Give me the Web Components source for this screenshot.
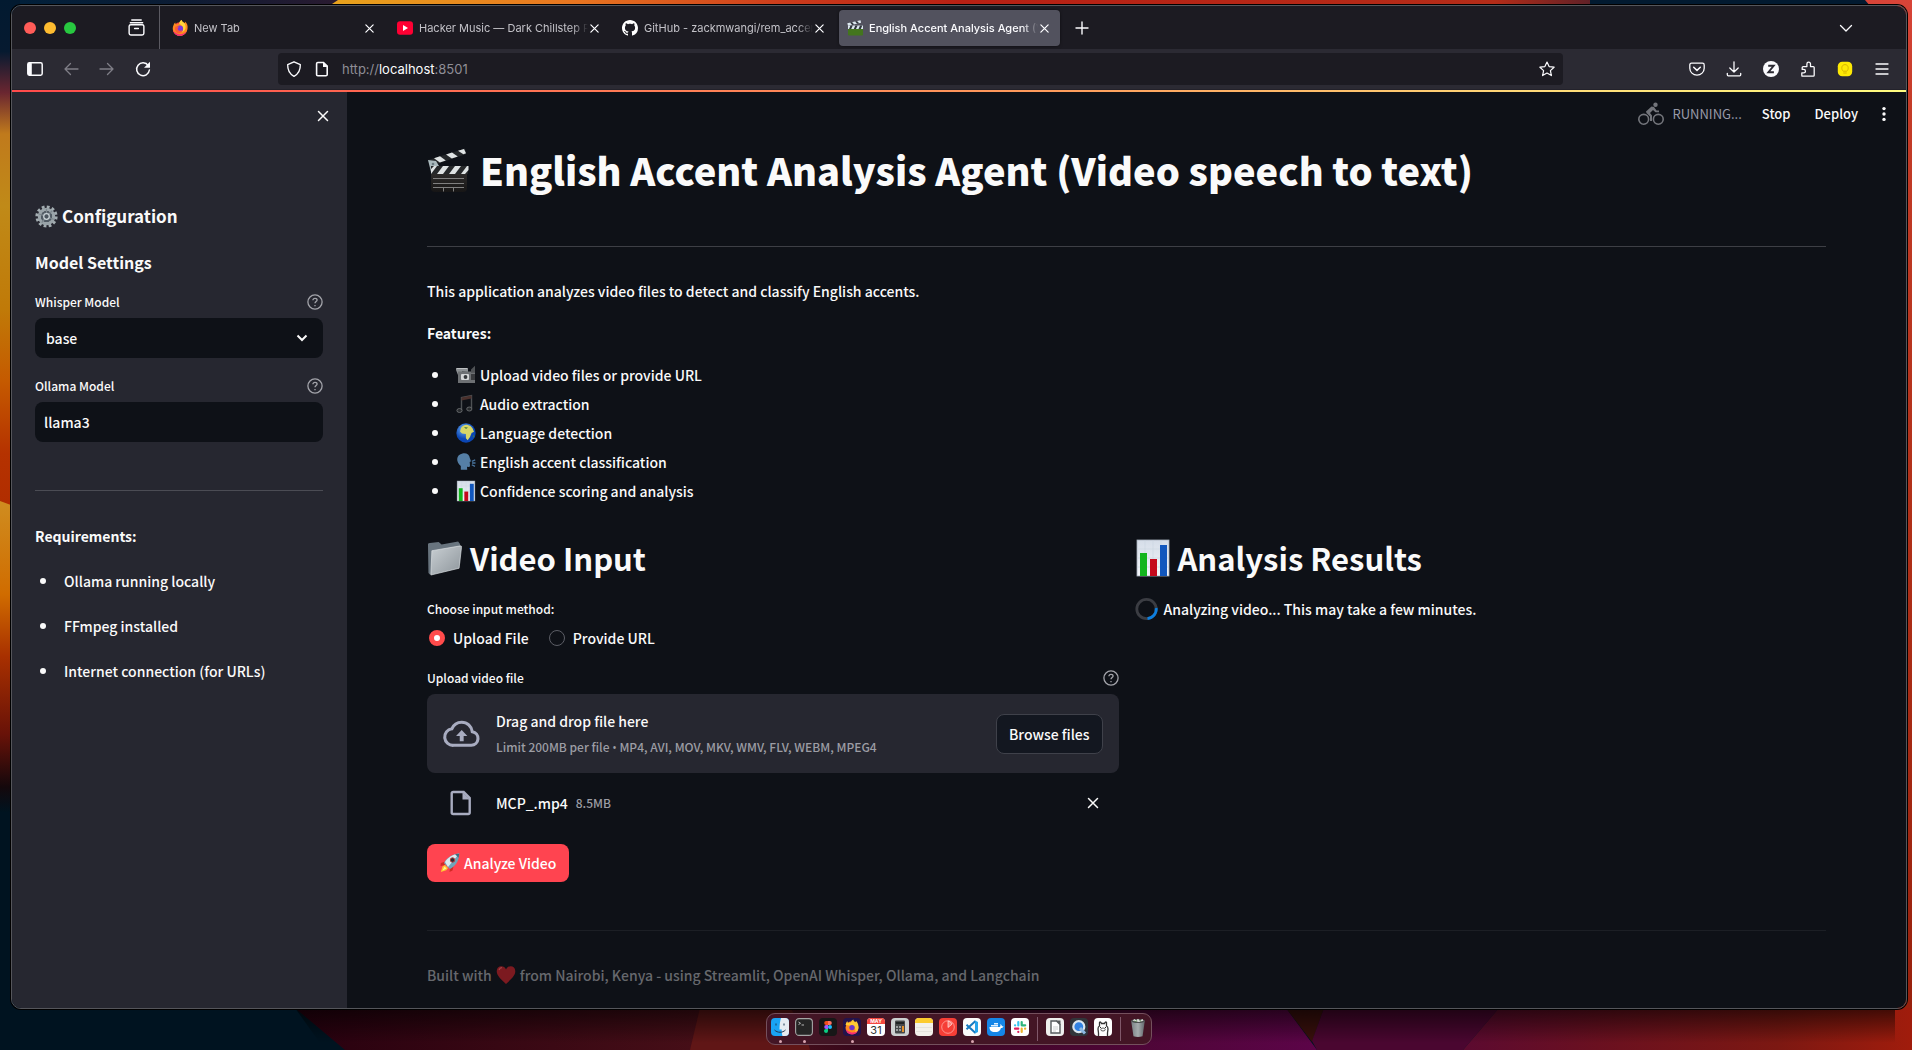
<!DOCTYPE html>
<html lang="en">
<head>
<meta charset="utf-8">
<title>English Accent Analysis Agent (Video speech to text)</title>
<style>
html,body{margin:0;height:100%;background:#00131f}
</style>
</head>
<body>
<desk-top></desk-top>
<script>
const ICONS = {
  archive:['0 0 18 18','<g fill="none" stroke="#fbfbfe" stroke-width="1.5" stroke-linecap="round"><path d="M4 1h10M2.5 4h13"/><rect x="1.2" y="6" width="15.6" height="11" rx="1.8"/><path d="M7 10h4"/></g>'],
  close:['0 0 16 16','<path d="M3.5 3.5l9 9M12.500 3.500l-9 9" stroke="currentColor" stroke-width="1.500" fill="none" stroke-linecap="round"/>'],
  plus:['0 0 16 16','<path d="M8 2v12M2 8h12" stroke="#fbfbfe" stroke-width="1.400" fill="none" stroke-linecap="round"/>'],
  chevron:['0 0 16 16','<path d="M2.500 5.500L8 11l5.500-5.500" stroke="#fbfbfe" stroke-width="1.300" fill="none" stroke-linecap="round" stroke-linejoin="round"/>'],
  sidebar:['0 0 16 16','<rect x=".8" y="1.800" width="14.400" height="12.400" rx="1.600" fill="none" stroke="#fbfbfe" stroke-width="1.500"/><rect x=".8" y="1.800" width="4" height="12.400" rx="1" fill="#fbfbfe"/>'],
  back:['0 0 16 16','<path d="M15 8H2M7.500 2.500L2 8l5.500 5.500" fill="none" stroke="#7f7e87" stroke-width="1.300" stroke-linecap="round" stroke-linejoin="round"/>'],
  forward:['0 0 16 16','<path d="M1 8h13M8.500 2.500L14 8l-5.500 5.500" fill="none" stroke="#7f7e87" stroke-width="1.300" stroke-linecap="round" stroke-linejoin="round"/>'],
  reload:['0 0 16 16','<path d="M13.300 4.600A6.400 6.400 0 1 0 14.400 9" fill="none" stroke="#fbfbfe" stroke-width="1.500" stroke-linecap="round"/><path d="M15 .8v6H9z" fill="#fbfbfe"/>'],
  shield:['0 0 16 16','<path d="M8 .8L14.300 3.600c.2 5-1.300 9-6.300 11.700C3 12.600 1.500 8.600 1.700 3.600z" fill="none" stroke="#fbfbfe" stroke-width="1.400" stroke-linejoin="round"/>'],
  page:['0 0 16 16','<path d="M3.800 1.500h5.700l3.700 3.700v8.300q0 1.300-1.300 1.300H3.900q-1.300 0-1.300-1.300V2.800q0-1.300 1.200-1.300z" fill="none" stroke="#fbfbfe" stroke-width="1.600"/><path d="M9 1v5h5z" fill="#fbfbfe"/>'],
  star:['0 0 16 16','<path d="M8 1l2.100 4.600 5 .6-3.700 3.400 1 5L8 12.100l-4.400 2.500 1-5L.9 6.200l5-.6z" fill="none" stroke="#fbfbfe" stroke-width="1.200" stroke-linejoin="round"/>'],
  pocket:['0 0 16 16','<path d="M2.500 2.200h11q1.700 0 1.700 1.700v3.400a7.200 6.800 0 0 1-14.400 0V3.900q0-1.700 1.700-1.700z" fill="none" stroke="#fbfbfe" stroke-width="1.300"/><path d="M4.700 6.300L8 9.400l3.300-3.100" fill="none" stroke="#fbfbfe" stroke-width="1.500" stroke-linecap="round" stroke-linejoin="round"/>'],
  download:['0 0 16 16','<path d="M8 .8v10M3.800 7L8 11l4.200-4M1.300 12.300v1.500q0 1 1 1h11.400q1 0 1-1v-1.500" fill="none" stroke="#fbfbfe" stroke-width="1.300" stroke-linecap="round" stroke-linejoin="round"/>'],
  zed:['0 0 16 16','<circle cx="8" cy="8" r="8" fill="#fbfbfe"/><path d="M5.200 4.800h5.500l-5.300 6.400h5.500" fill="none" stroke="#2b2a33" stroke-width="1.900"/>'],
  puzzle:['0 0 16 16','<path d="M2 15.200h11.200q1 0 1-1V6.600q0-1-1-1h-2.700V3a1.800 1.800 0 0 0-3.600 0v2.600H3.200q-1 0-1 1v1.800h1.500a1.700 1.700 0 0 1 0 3.500H1.800v2.300z" fill="none" stroke="#fbfbfe" stroke-width="1.300" stroke-linejoin="round"/>'],
  bulb:['0 0 16 16','<rect x=".8" y=".8" width="14.400" height="14.400" rx="4.500" fill="#fde905"/><path d="M6.200 10.200C4 8.500 4.200 3.600 8 3.600s4 4.900 1.800 6.600zM6.300 12h3.400" fill="none" stroke="#d8b400" stroke-width="1"/>'],
  menu:['0 0 16 16','<path d="M2 3h12M2 8h12M2 13h12" stroke="#fbfbfe" stroke-width="1.300" stroke-linecap="round"/>'],
  youtube:['0 0 16 16','<rect y="1.200" width="16" height="13.600" rx="3" fill="#f03"/><path d="M6 5l5 3-5 3z" fill="#fff"/>'],
  github:['0 0 16 16','<path fill="#fff" d="M8 0C3.580 0 0 3.580 0 8c0 3.540 2.290 6.530 5.470 7.590.4.070.55-.17.55-.38 0-.19-.01-.82-.01-1.490-2.010.37-2.530-.49-2.690-.94-.09-.23-.48-.94-.82-1.130-.28-.15-.68-.52-.01-.53.63-.01 1.080.58 1.230.82.72 1.210 1.870.87 2.330.66.07-.52.28-.87.51-1.070-1.780-.2-3.640-.89-3.640-3.950 0-.87.31-1.590.82-2.150-.08-.2-.36-1.020.08-2.120 0 0 .67-.21 2.200.82.64-.18 1.320-.27 2-.27s1.360.09 2 .27c1.530-1.040 2.200-.82 2.200-.82.44 1.100.16 1.920.08 2.120.51.56.82 1.270.82 2.150 0 3.070-1.870 3.750-3.650 3.950.29.25.54.73.54 1.480 0 1.070-.01 1.930-.01 2.200 0 .21.15.46.55.38A8.010 8.010 0 0 0 16 8c0-4.420-3.580-8-8-8z"/>'],
  firefox:['0 0 16 16','<circle cx="8" cy="9" r="6.800" fill="#ff4f3a"/><path d="M1.400 5.500C2 3.500 3 2.600 3.300 2.500c0 1 .4 1.600 1 2 1-.6 2-.7 3-.4C7 2 8.500.6 9.800 0c0 1.500 1.200 2 2.400 3 1-.1.800-.8.700-1.400C15.300 3.500 16 6 15.500 9c-.5 3-2.500 6-6 6.700C5 16.500 1.500 13.700.9 10c-.3-1.700 0-3.200.5-4.500z" fill="#ff8a1f"/><path d="M9.800 0c0 1.500 1.200 2 2.400 3 1.300 1.600 1.700 3.500 1.200 5.500-.5 2-2 3.300-3.800 3.400C12 9 11 5.500 7.300 4.100 7 2 8.500.6 9.800 0z" fill="#ffd53a"/><circle cx="7.800" cy="8.700" r="3.300" fill="#7a37dd"/><path d="M3 7c1.500-1.200 3.300-1 4.500 0-1.500.2-2 1.200-1.700 2.200.6 1.800 3.200 2 4.600.6-.3 2.500-2.400 3.900-4.500 3.400C3.700 12.700 2.500 10 3 7z" fill="#ff5a36"/><path d="M1 10c.6 3.500 3.600 6.300 8 5.800 2.500-.4 4.500-2 5.600-4.200C12.500 13.500 9 15 6 14c-2.500-.8-4.300-2.300-5-4z" fill="#f6287c"/>'],
  firefoxdock:['0 0 18 18','<rect width="18" height="18" rx="4" fill="#22134c"/><circle cx="9" cy="9.800" r="6.500" fill="#ff8a1f"/><path d="M2.500 7Q3 4.500 4.300 3q0 1.500 1 1.800l2.700-.2Q8 2.500 10.300 1.500q0 1.800 2 2.700l.8-1.200q2.800 2.800 2.300 7.300-.3 3-3.300 4.900 1-4-1.100-7z" fill="#ffc934"/><circle cx="9" cy="9.600" r="2.700" fill="#6c35cf"/><path d="M2.700 11q1 5.400 6.300 5.400 3.700 0 5.600-3.500-3 2-6.200 1.500T2.700 11z" fill="#f3297a"/>'],
  clapgreen:['0 0 16 16','<rect x="1" y="9" width="15" height="6.500" rx="1" fill="#43751d"/><path d="M.3 3.200L13.500.2l.6 2.600L1 5.800z" fill="#dce8ef"/><path d="M3 2.600l2.200 2.300 2-.5L5 2.100zM8 1.400l2.200 2.300 2-.5L10 .9z" fill="#30363c"/><rect x="1" y="5.500" width="15" height="3.500" fill="#dce8ef"/><path d="M3.500 5.500h2.300L4.200 9H2zM8.300 5.500h2.300L9 9H6.800zM13 5.500h2.300L13.800 9h-2.300z" fill="#30363c"/>'],
  clapper:['0 0 42 46','<defs><linearGradient id="a" x2="0" y2="1"><stop stop-color="#2c2a29"/><stop offset="1" stop-color="#171616"/></linearGradient></defs><path d="M1 13L38 1.500l1.200 5.500L4 19z" fill="#24272a"/><path d="M7 11.200l6-1.900 5.800 4.200-6 1.900zM19 7.500l6-1.900 5.800 4-6 2zM31 3.800l6-1.900 2 4.400-2.600.9z" fill="#dfe3e4"/><path d="M1 13l8 1 3 5-1.500 6H4z" fill="#aab9bd"/><circle cx="6" cy="17" r="1.300" fill="#6a7a80"/><rect x="4" y="19" width="37" height="8" fill="#26282a"/><path d="M10 27l6-8h6l-6 8zM22 27l6-8h6l-6 8zM34 27l6-8h1.500v4L38 27zM4 27v-5l3-3h3z" fill="#dfe3e4"/><path d="M4 27h36v14q0 4-4 4H8q-4 0-4-4z" fill="url(#a)"/><path d="M6 31.500h31M6 36.500h31M6 40.500h31M16.500 41v3.500M26.500 41v3.500" stroke="#8b8b8b" stroke-width=".9"/>'],
  gear:['0 0 24 24','<g fill="none"><circle cx="12" cy="12" r="10" stroke="#a3adb1" stroke-width="3.200" stroke-dasharray="2.900 2.336"/><circle cx="12" cy="12" r="7.400" stroke="#9aa4a9" stroke-width="3.500"/><circle cx="12" cy="12" r="5.800" fill="#535d66"/><path d="M12 12V4M12 12l7.500 3M12 12l-5 6.500M12 12L4.500 9.500M12 12l6-6" stroke="#7d878d" stroke-width="1.300"/><circle cx="12" cy="12" r="2.900" fill="#4c565f" stroke="#ccd5d9" stroke-width="1.300"/></g>'],
  help:['0 0 16 16','<circle cx="8" cy="8" r="7.100" fill="none" stroke="#a3a4aa" stroke-width="1.300"/><path d="M5.900 6.300C6 4.900 7 4.300 8 4.300s2.100.6 2.100 1.800c0 1.400-2.100 1.600-2.100 3.200M8 11v1.200" fill="none" stroke="#a3a4aa" stroke-width="1.300"/>'],
  camera:['0 0 20 20','<path d="M0 3h12v4L6 6.500v6H3L0 5z" fill="#8c9093"/><path d="M2 6.500h13l4-4v15.500H2z" fill="#6d7073"/><rect x="5" y="9" width="8" height="6" rx="1" fill="#d4d6d7"/><circle cx="9.500" cy="12" r="1.900" fill="#34373a"/><path d="M15 4.500L19 .8v7h-4z" fill="#4f5255"/><path d="M15 9h4v6h-4z" fill="#393b3e"/><path d="M1 3.500h10" stroke="#bdc0c2"/>'],
  music:['0 0 20 20','<path d="M5.500 16V3.500L15.500 1.500V14.500" fill="none" stroke="#4d5154" stroke-width="1.400"/><path d="M5.500 3.500L15.500 1.500v3l-10 2z" fill="#4a302c"/><ellipse cx="3.500" cy="16.500" rx="2.600" ry="2" fill="#272a2d" stroke="#73777a" stroke-width=".8"/><ellipse cx="13.300" cy="15" rx="2.600" ry="2" fill="#272a2d" stroke="#73777a" stroke-width=".8"/>'],
  globe:['0 0 20 20','<defs><radialGradient id="a" cx=".4" cy=".3"><stop stop-color="#6fb4f5"/><stop offset="1" stop-color="#0b46b4"/></radialGradient></defs><circle cx="10" cy="10" r="9.700" fill="url(#a)"/><path d="M5 5c1-2 3-3 6-3.300l3.500 1.200 2 2.300 1.500 3.500-2.500 1.300-1.500 4-2.300 3.300-1.800-2V11L6 10.600 4 8.500z" fill="#d7d767"/><path d="M8 4l4 .5-2 1.500zM17 12l1.300 1-1.300 2z" fill="#487f3b"/>'],
  speak:['0 0 20 20','<path d="M6.500 1.500c4-.8 7 1.300 7.300 4.500l1.200 3.200-1.300.8.300 3.700q0 1.300-1.500 1.200l-1.500-.1.200 3H4.800V14C2.500 12 1 9.500 1.200 7c.2-3 2.300-5 5.300-5.500z" fill="#557fa6"/><path d="M15.800 9.300l3.400-1.500M16 11h3.500M15.800 12.700l3.200 1.700" stroke="#48739c" stroke-width="1.300"/>'],
  chart:['0 0 32 36','<defs><linearGradient id="a" x2="0" y2="1"><stop stop-color="#d5dde8"/><stop offset="1" stop-color="#f3f6fa"/></linearGradient></defs><rect width="32" height="36" fill="url(#a)" stroke="#a7b0bc" stroke-width=".8"/><path d="M0 9h32M0 18h32M0 27h32M8 0v36M16 0v36M24 0v36" stroke="#c6d2df" stroke-width=".5"/><path d="M3 13h7v23H3z" fill="#13b51d"/><path d="M13 19h7v17h-7z" fill="#c5091c"/><path d="M23 5h7v31h-7z" fill="#1257bd"/>'],
  folder:['0 0 36 36','<defs><linearGradient id="a" x2="1" y2="1"><stop stop-color="#c9cfd3"/><stop offset="1" stop-color="#8d959b"/></linearGradient></defs><path d="M1 3.500Q1 2 3 2l9-1 3 2.500L32 .5 34 3v20L3 34.500 1.500 33z" fill="#68747e"/><path d="M5 10l29.500-5q1.200 0 1 1.500L33 28 4 35z" fill="url(#a)" stroke="#dce0e3" stroke-width=".7"/>'],
  cloud:['0 0 36 36','<path d="M10.300 29.500h17.200a6.700 6.700 0 0 0 1-13.300C27.700 11 23.600 7 18.200 7c-4.400 0-7.900 2.500-9.600 6.400A8.100 8.100 0 0 0 10.300 29.500z" fill="none" stroke="#a8acc0" stroke-width="3"/><path d="M18.200 14.500l5.500 6h-3.600v5h-3.800v-5h-3.600z" fill="#a8acc0"/>'],
  file:['0 0 26 26','<path d="M5.200 2h10.500l6 6v14.500q0 1.500-1.500 1.500h-15q-1.500 0-1.500-1.500v-19Q3.700 2 5.200 2z" fill="none" stroke="#a8acc0" stroke-width="2.400"/><path d="M14.500 2v7.500h7.500z" fill="#a8acc0"/>'],
  rocket:['0 0 20 20','<path d="M4 9L.8 10l-.3 3 4.500-1zM10 15l-.5 4 3-1.500 1-4z" fill="#d22a24"/><path d="M5 12l-2.500 1.500L.8 19l5.500-1.700L8 15z" fill="#ffc331"/><path d="M4.500 13.500L2.500 17.500 6.500 15.500z" fill="#fff3a0"/><path d="M4 10C7 4.500 12 1 19.300.5 19 8 15.500 13 10 16z" fill="#6fa4b8"/><path d="M5 9C8 4.500 13 1.200 19.300.5L8 14z" fill="#dceaf0"/><path d="M15 1.300l4.300-.8-.7 4.300z" fill="#406b7d"/><circle cx="12.500" cy="7" r="2.200" fill="#2a2f37" stroke="#b93a38" stroke-width="1"/>'],
  heart:['0 0 20 20','<path d="M10 19C6 15 .7 11 .7 6.200.7 3 2.800 1.200 5.300 1.200c2.200 0 3.800 1.200 4.700 3.200.9-2 2.500-3.200 4.700-3.200 2.500 0 4.600 1.800 4.600 5C19.300 11 14 15 10 19z" fill="#7c1a20"/><path d="M3 5q1-2.500 3-2.300" stroke="#a04448" stroke-width="1.200" fill="none"/>'],
  bike:['0 0 26 24','<g fill="none" stroke="#73757b" stroke-width="1.600"><circle cx="5.700" cy="17.300" r="4.900"/><circle cx="20.300" cy="17.300" r="4.900"/></g><circle cx="17.500" cy="2.700" r="2.200" fill="#73757b"/><path d="M8 9.500L13.500 4.500l2.500.5 2.500 3.500H21v1.800h-3.500L15 8l-3 3 2 2.500V19h-2v-4.500L8.500 11z" fill="#73757b"/>'],
  dots:['0 0 16 16','<g fill="#fafafa"><circle cx="8" cy="2.600" r="1.700"/><circle cx="8" cy="8" r="1.700"/><circle cx="8" cy="13.400" r="1.700"/></g>'],
  spinner:['0 0 24 24','<circle cx="11.500" cy="12" r="9.700" fill="none" stroke="#3b3d43" stroke-width="2.800"/><path d="M21.200 11A9.700 9.700 0 0 1 12.500 21.700" fill="none" stroke="#0c7fe0" stroke-width="2.800"/>'],
  finder:['0 0 18 18','<rect width="18" height="18" rx="4" fill="#19a4f4"/><path d="M10 0h4q4 0 4 4v10q0 4-4 4h-2.500c-.6-2-.8-4-.8-6.500H8.500C8.500 7 9 3 10 0z" fill="#e6ebf1"/><path d="M5 5.500v2M13 5.500v2M3.500 12c3 3 8 3 11 0" fill="none" stroke="#1c3650" stroke-width="1"/>'],
  terminal:['0 0 18 18','<rect x=".6" y=".6" width="16.800" height="16.800" rx="3.500" fill="#252525" stroke="#a5a5a5" stroke-width="1.100"/><path d="M3.500 4l2 1.300-2 1.300M6.500 7h2.500" fill="none" stroke="#ddd" stroke-width=".8"/>'],
  figma:['0 0 18 18','<rect width="18" height="18" rx="4" fill="#171717"/><path d="M9 3H7.200a2 2 0 0 0 0 4H9z" fill="#f24e1e"/><path d="M9 3h1.800a2 2 0 0 1 0 4H9z" fill="#ff7262"/><path d="M9 7H7.200a2 2 0 0 0 0 4H9z" fill="#a259ff"/><circle cx="11" cy="9" r="2" fill="#1abcfe"/><path d="M9 11H7.200A2 2 0 1 0 9 13z" fill="#0acf83"/>'],
  calc:['0 0 18 18','<rect width="18" height="18" rx="4" fill="#ccd0d0"/><rect x="4" y="2.500" width="10" height="13" rx="1" fill="#454849"/><path d="M5 4h8v2H5z" fill="#1e2222"/><g fill="#9a9d9e"><path d="M5 8h2v2H5zM8 8h2v2H8zM5 11h2v2H5zM8 11h2v2H8z"/></g><path d="M11 8h2v6h-2z" fill="#e3902a"/>'],
  notes:['0 0 18 18','<rect width="18" height="18" rx="4" fill="#f3f1eb"/><path d="M0 5V4q0-4 4-4h10q4 0 4 4v1z" fill="#fccb2e"/><path d="M1 9.500h16M1 13.500h16" stroke="#d6d4cd" stroke-width=".5"/>'],
  clock:['0 0 18 18','<rect width="18" height="18" rx="4" fill="#f63e36"/><circle cx="9" cy="9" r="6.300" fill="none" stroke="#ffaaa3" stroke-width=".8"/><path d="M9 3v6.500l4.200-3.500A5.500 5.500 0 0 0 9 3z" fill="#ff8078" stroke="#fff" stroke-width=".6"/>'],
  vscode:['0 0 18 18','<rect width="18" height="18" rx="4" fill="#fbfbfb"/><path d="M12.500 3L3.500 11.200M3.500 6.800l9 8.200" stroke="#1678c0" stroke-width="2" fill="none"/><path d="M12 2.500l3 1.500v10l-3 1.500z" fill="#26a3eb"/>'],
  docker:['0 0 18 18','<rect width="18" height="18" rx="4" fill="#1586e8"/><path d="M2.500 9h10c1 0 1.200-2 .8-3 1 .5 1.500 1.400 1.500 2.200h1.700c-.6 1.500-1.600 1.700-2.500 1.700-1 3-3 4.100-6 4.100-4 0-5.500-2-5.500-5z" fill="#fff"/><path d="M4 7h7v1.500H4zM7 5h4v1.500H7z" fill="#e4f2ff"/>'],
  slack:['0 0 18 18','<rect width="18" height="18" rx="4" fill="#fff"/><g stroke-width="2.200" stroke-linecap="round"><path d="M7.300 4v3.500M4 7.300h.2" stroke="#36c5f0"/><path d="M10.700 7.300h3.500M10.700 4v3" stroke="#2eb67d"/><path d="M10.700 10.700V14M14 10.700h.2" stroke="#ecb22e"/><path d="M7.300 10.700H4M7.300 14v-.2" stroke="#e01e5a"/></g>'],
  libre:['0 0 18 18','<rect width="18" height="18" rx="4" fill="#efefed"/><path d="M5 3h5.500L14 6.500V15H5z" fill="#fff" stroke="#565a5c" stroke-width="1.400"/><path d="M10 2.500h4.500V7z" fill="#56595b"/><path d="M7 9h5M7 11h5M7 13h3" stroke="#b8bbbb" stroke-width=".7"/>'],
  quicktime:['0 0 18 18','<rect width="18" height="18" rx="4" fill="#30353a"/><circle cx="8.800" cy="8.700" r="5.500" fill="#3182e2" stroke="#d9e5ee" stroke-width="2.200"/><path d="M10 10l5 5.500" stroke="#8cb8e0" stroke-width="3"/>'],
  ollama:['0 0 18 18','<rect width="18" height="18" rx="4" fill="#fff"/><path d="M4.500 18v-3l-.5-4q0-2.500 1.500-3V4.500q.8-1.500 2 1h3q1.200-2.500 2-1V8q1.500.5 1.500 3l-.5 4v3" fill="none" stroke="#333" stroke-width="1.300"/><ellipse cx="9" cy="11.500" rx="2.200" ry="1.500" fill="none" stroke="#333" stroke-width=".8"/><path d="M6 9.500h1M11 9.500h1" stroke="#222" stroke-width="1.200"/>'],
  trash:['0 0 18 22','<defs><linearGradient id="a"><stop stop-color="#788084"/><stop offset=".5" stop-color="#a6acae"/><stop offset="1" stop-color="#5f6669"/></linearGradient></defs><path d="M1.500 3h15L14 20q-5 1.800-10 0z" fill="url(#a)"/><ellipse cx="9" cy="3.300" rx="7.500" ry="2.300" fill="#4d5152"/><path d="M3 3l2-2 2 1.500L9 .8l2 2L14 1l1 2-5 1.500z" fill="#d9dcd8"/><path d="M5 3l1 1 2-1M11 2l1 2" stroke="#56874e" fill="none"/>']
};
function define(name, html, setup){
  const tpl = document.createElement('template');
  tpl.innerHTML = html;
  customElements.define(name, class extends HTMLElement{
    constructor(){ super(); this.attachShadow({mode:'open'}).append(tpl.content.cloneNode(true)); }
    connectedCallback(){ if(setup) setup(this, this.shadowRoot); }
  });
}
define('ui-icon','<style>:host{display:block;flex:none;width:var(--w,16px);height:var(--h,var(--w,16px))}svg{display:block;width:100%;height:100%;overflow:visible}</style><svg aria-hidden="true"></svg>',(el,root)=>{
  const [box,art]=ICONS[el.getAttribute('name')];
  const svg=root.querySelector('svg');
  svg.setAttribute('viewBox',box);
  svg.innerHTML=art;
});

define('wall-paper',`<style>:host{display:block}svg{display:block;width:100%;height:100%}</style>
<svg viewBox="0 0 1912 1050" preserveAspectRatio="none" aria-hidden="true">
<defs>
<linearGradient id="l" x2="0" y2="1"><stop stop-color="#021a30"/><stop offset=".1" stop-color="#061a30"/><stop offset=".18" stop-color="#6a2630"/><stop offset=".26" stop-color="#c07a1c"/><stop offset=".4" stop-color="#c08a18"/><stop offset=".6" stop-color="#c07a08"/><stop offset=".74" stop-color="#c55a00"/><stop offset=".88" stop-color="#b53200"/><stop offset="1" stop-color="#b02c00"/></linearGradient>
<linearGradient id="l2" x2="0" y2="1"><stop stop-color="#cf8d20"/><stop offset=".3" stop-color="#d06c00"/><stop offset=".5" stop-color="#a83000"/><stop offset=".75" stop-color="#681208"/><stop offset=".92" stop-color="#14080c"/><stop offset="1" stop-color="#00131f"/></linearGradient>
<linearGradient id="t"><stop stop-color="#02203a"/><stop offset=".5" stop-color="#0c1c34"/><stop offset="1" stop-color="#2a1a30"/></linearGradient>
<linearGradient id="t2"><stop stop-color="#e8a41c"/><stop offset=".2" stop-color="#e87420"/><stop offset=".36" stop-color="#cc3c1c"/><stop offset=".5" stop-color="#b82014"/><stop offset=".92" stop-color="#b42c18"/><stop offset="1" stop-color="#5a2028"/></linearGradient>
<linearGradient id="r" x2="0" y2="1"><stop stop-color="#d84438"/><stop offset=".1" stop-color="#c43c28"/><stop offset=".5" stop-color="#b03018"/><stop offset="1" stop-color="#96200c"/></linearGradient>
<linearGradient id="b"><stop stop-color="#5c0a30"/><stop offset=".3" stop-color="#6a1020"/><stop offset=".7" stop-color="#7c1812"/><stop offset="1" stop-color="#a01c0c"/></linearGradient>
<linearGradient id="m"><stop stop-color="#28000f"/><stop offset=".45" stop-color="#4a1018"/><stop offset=".55" stop-color="#38081c"/><stop offset="1" stop-color="#5c0448"/></linearGradient>
<linearGradient id="s" x2="0" y2="1"><stop stop-opacity=".6"/><stop offset="1" stop-opacity="0"/></linearGradient>
</defs>
<rect width="1912" height="1050" fill="#001320"/>
<path d="M0 0h30v515H0z" fill="url(#l)"/><path d="M0 501l30 11v300H0z" fill="url(#l2)"/>
<path d="M20 0h320v8H20z" fill="url(#t)"/><path d="M338 0L326 8h1270V0z" fill="url(#t2)"/>
<path d="M1590 0h280v8h-280z" fill="#021a30"/><path d="M1865 0h47v1050h-30V20z" fill="url(#r)"/>
<path d="M295 1008h991l31 42H345z" fill="url(#m)"/>
<path d="M700 1008h90q15 20 20 42H690z" fill="#601616"/>
<path d="M1286 1008h38l-12 34z" fill="#3a100c"/><path d="M1324 1008h175l-36 42h-146l-5-9z" fill="#4a0630"/>
<path d="M1499 1008h413v42h-449z" fill="url(#b)"/>
<path d="M295 1008h1600v35H320z" fill="url(#s)"/>
</svg>`);

define('browser-tab',`<style>
:host{display:block;width:225px;flex:none;box-sizing:border-box;padding:4px 4px 4px 0}
div{height:36px;display:flex;align-items:center;padding:0 9px 0 8px;border-radius:4px;color:#c3c2c8;font:11px/16px Inter,sans-serif}
:host([active]) div{background:#52525e;color:#fbfbfe;font-weight:500;box-shadow:0 0 3px #0008}
span{flex:1;min-width:0;margin-left:6px;overflow:hidden;white-space:nowrap;-webkit-mask:linear-gradient(90deg,#000 calc(100% - 16px),transparent);mask:linear-gradient(90deg,#000 calc(100% - 16px),transparent)}
button{all:unset;color:#fbfbfe;--w:13px}
</style><div><slot name="icon"></slot><span><slot></slot></span><button aria-label="Close tab"><ui-icon name="close"></ui-icon></button></div>`);

define('tab-strip',`<style>
:host{display:flex;height:43px;background:#1c1b22;align-items:center}
.lights{display:flex;gap:8px;padding-left:12px}
i{width:12px;height:12px;border-radius:50%}
button{all:unset}
.arch{margin:0 14px 0 52px;--w:17px}
.tabs{display:flex;height:43px;border-left:1px solid #5b5a62;padding-left:4px}
.plus{margin-left:10px}.all{margin-left:auto;margin-right:52px}
</style>
<div class="lights"><i style="background:#ff5c58"></i><i style="background:#febc30"></i><i style="background:#28c840"></i></div>
<button class="arch" aria-label="Recent browsing"><ui-icon name="archive"></ui-icon></button>
<div class="tabs">
<browser-tab><ui-icon slot="icon" name="firefox"></ui-icon>New Tab</browser-tab>
<browser-tab><ui-icon slot="icon" name="youtube"></ui-icon>Hacker Music — Dark Chillstep Playlist</browser-tab>
<browser-tab><ui-icon slot="icon" name="github"></ui-icon>GitHub - zackmwangi/rem_accent</browser-tab>
<browser-tab active><ui-icon slot="icon" name="clapgreen"></ui-icon>English Accent Analysis Agent (Video)</browser-tab>
</div>
<button class="plus" aria-label="New tab"><ui-icon name="plus"></ui-icon></button>
<button class="all" aria-label="List all tabs"><ui-icon name="chevron"></ui-icon></button>`);

define('nav-bar',`<style>
:host{display:flex;align-items:center;height:40px;background:#2b2a33;padding:0 16px 0 15px}
button{all:unset;display:block}
.left,.right{display:flex;gap:20px}
.right{margin-left:126px;gap:21px}
.url{flex:1;height:32px;margin-left:127px;background:#1c1b22;border-radius:4px;display:flex;align-items:center;gap:12px;padding:0 8px;font:13px/18px Inter,sans-serif;color:#8f8e96}
.url a{flex:1;color:inherit;text-decoration:none}b{font-weight:400;color:#fbfbfe}
</style>
<div class="left"><button aria-label="Sidebar"><ui-icon name="sidebar"></ui-icon></button><button aria-label="Back"><ui-icon name="back"></ui-icon></button><button aria-label="Forward"><ui-icon name="forward"></ui-icon></button><button aria-label="Reload"><ui-icon name="reload"></ui-icon></button></div>
<div class="url"><ui-icon name="shield"></ui-icon><ui-icon name="page"></ui-icon><a href="http://localhost:8501">http://<b>localhost</b>:8501</a><button aria-label="Bookmark"><ui-icon name="star"></ui-icon></button></div>
<div class="right"><button aria-label="Pocket"><ui-icon name="pocket"></ui-icon></button><button aria-label="Downloads"><ui-icon name="download"></ui-icon></button><button aria-label="Account"><ui-icon name="zed"></ui-icon></button><button aria-label="Extensions"><ui-icon name="puzzle"></ui-icon></button><button aria-label="Hints"><ui-icon name="bulb"></ui-icon></button><button aria-label="Menu"><ui-icon name="menu"></ui-icon></button></div>`);

define('field-label',`<style>:host{display:flex;justify-content:space-between;align-items:center;font-size:12px;line-height:20px;--w:16px}</style><slot></slot><ui-icon name="help"></ui-icon>`);

define('side-bar',`<style>
:host{display:flex;flex-direction:column;width:335px;flex:none;box-sizing:border-box;padding:0 24px 0 23px;background:#262730}
.close{all:unset;align-self:flex-end;margin:16px -8px 0 0;--w:16px;height:16px}
h2,h3,p,ul{margin:0}
h2{display:flex;align-items:center;gap:4px;font-size:17px;line-height:24px;margin-top:80px;--w:23px}
h3{font-size:16px;line-height:24px;margin:22px 0 18px}
select,input{all:unset;box-sizing:border-box;width:100%;height:40px;border-radius:8px;background:#0e1117;color:#fafafa;font-size:14px;line-height:40px;padding:0 9px;margin-top:6px}
select{padding:0 11px;background:#0e1117 url("data:image/svg+xml,%3Csvg xmlns='http://www.w3.org/2000/svg' viewBox='0 0 12 12'%3E%3Cpath d='M1.500 3.500L6 8l4.500-4.500' fill='none' stroke='%23fafafa' stroke-width='2'/%3E%3C/svg%3E") no-repeat right 15px center/12px}
.field{margin-bottom:18px}
hr{width:100%;border:0;border-top:1px solid #4b4c54;margin:30px 0 33px}
ul{list-style:none;padding:0 0 0 5px;display:flex;flex-direction:column;gap:21px;margin-top:21px}
p,li{font-size:14px;line-height:24px}
li{display:flex;align-items:center;gap:18px}
li::before{content:"";width:6px;height:6px;border-radius:50%;background:#fafafa}
</style>
<button class="close" aria-label="Close sidebar"><ui-icon name="close"></ui-icon></button>
<h2><ui-icon name="gear"></ui-icon>Configuration</h2>
<h3>Model Settings</h3>
<div class="field"><field-label><label for="w">Whisper Model</label></field-label><select id="w"><option>base</option></select></div>
<div class="field"><field-label><label for="o">Ollama Model</label></field-label><input id="o" type="text" value="llama3"></div>
<hr>
<p><b>Requirements:</b></p>
<ul><li>Ollama running locally</li><li>FFmpeg installed</li><li>Internet connection (for URLs)</li></ul>`);

define('app-header',`<style>
:host{display:flex;justify-content:flex-end;align-items:center;height:44px;padding:0 14px 0 0;font-size:13px;line-height:24px}
button{all:unset}
span{color:#989aa8;margin:0 20px 0 8px;font-weight:400}
.d{margin:0 18px 0 24px}
</style><ui-icon name="bike" style="--w:26px;--h:24px"></ui-icon><span>RUNNING...</span><button>Stop</button><button class="d">Deploy</button><button aria-label="Options"><ui-icon name="dots"></ui-icon></button>`);

define('feature-item',`<style>:host{display:flex;align-items:center;gap:4px;font-size:14px;line-height:24px;--w:20px}:host::before{content:"";width:6px;height:6px;border-radius:50%;background:#fafafa;margin:0 14px 0 5px}</style><slot></slot>`);

define('section-title',`<style>:host{display:block}h2{display:flex;align-items:center;gap:8px;margin:0;font-size:31px;line-height:44px;font-weight:700}</style><h2><slot name="icon"></slot><slot></slot></h2>`);

define('file-drop',`<style>
:host{display:block}
.zone{display:flex;align-items:center;gap:16px;padding:0 16px;height:79px;border-radius:8px;background:#262730;margin-top:6px;--w:37px}
.t{flex:1;font-size:14px;line-height:24px}
small{display:block;font-size:12px;line-height:20px;margin-top:4px;color:#9c9da4}
small i{font-style:normal;font-family:"Open Sans",sans-serif}
button{all:unset}
.b{box-sizing:border-box;height:40px;border:1px solid #3f414a;border-radius:8px;padding:0 12px;background:#131720;font-size:14px;line-height:38px}
.f{display:flex;align-items:center;height:40px;margin-top:10px;padding:0 18px 0 21px;font-size:14px;line-height:24px}
.f small{display:inline;margin:0 auto 0 8px}
.f>ui-icon{--w:26px;margin-right:22px}
</style>
<field-label><span>Upload video file</span></field-label>
<div class="zone"><ui-icon name="cloud"></ui-icon><div class="t">Drag and drop file here<small>Limit 200MB per file <i>•</i> MP4, AVI, MOV, MKV, WMV, FLV, WEBM, MPEG4</small></div><button class="b">Browse files</button></div>
<div class="f"><ui-icon name="file"></ui-icon><span>MCP_.mp4</span><small>8.5MB</small><button aria-label="Remove file"><ui-icon name="close"></ui-icon></button></div>`);

define('video-input',`<style>
:host{display:block;flex:1}
fieldset{all:unset;display:block;margin-top:19px}
legend{padding:0;font-size:12px;line-height:20px;margin-bottom:7px}
.r{display:flex;gap:20px;padding-left:2px}
label{display:flex;align-items:center;gap:8px;font-size:14px;line-height:24px}
input{appearance:none;box-sizing:border-box;margin:0;width:16px;height:16px;border-radius:50%;border:1px solid #5c5e66;background:#0e1117}
input:checked{border:5px solid #ff4b4b;background:#fff}
file-drop{margin-top:18px}
.go{all:unset;display:inline-flex;align-items:center;gap:4px;height:38px;padding:0 13px;margin-top:21px;border-radius:8px;background:#ff4450;color:#fff;font-size:14px;--w:20px}
</style>
<section-title><ui-icon slot="icon" name="folder" style="--w:35px"></ui-icon>Video Input</section-title>
<fieldset><legend>Choose input method:</legend><div class="r"><label><input type="radio" name="m" checked>Upload File</label><label><input type="radio" name="m">Provide URL</label></div></fieldset>
<file-drop></file-drop>
<button class="go"><ui-icon name="rocket"></ui-icon>Analyze Video</button>`);

define('analysis-results',`<style>:host{display:block;flex:1}p{display:flex;align-items:center;gap:5px;margin:17px 0 0;font-size:14px;line-height:24px}</style>
<section-title><ui-icon slot="icon" name="chart" style="--w:32px;--h:36px;margin:0 1px 0 2px"></ui-icon>Analysis Results</section-title>
<p><ui-icon name="spinner" style="--w:24px"></ui-icon>Analyzing video... This may take a few minutes.</p>`);

define('main-view',`<style>
:host{display:block;flex:1;background:#0e1117}
main{padding:8px 80px 0;font-size:14px;line-height:24px}
h1{display:flex;align-items:center;gap:11px;margin:0;font-size:38px;line-height:52px;font-weight:900}
hr{border:0;border-top:1px solid #3d3f45;margin:50px 0 32px}
p{margin:0 0 18px}
.list{display:flex;flex-direction:column;gap:5px}
.cols{display:flex;gap:16px;margin-top:33px}
.low{border-color:#1c1f25;margin:48px 0 32px}
footer{display:flex;align-items:center;gap:4px;color:#66686d;--w:20px}
</style>
<app-header></app-header>
<main>
<h1><ui-icon name="clapper" style="--w:42px;--h:46px"></ui-icon>English Accent Analysis Agent (Video speech to text)</h1>
<hr>
<p>This application analyzes video files to detect and classify English accents.</p>
<p><b>Features:</b></p>
<div class="list">
<feature-item><ui-icon name="camera"></ui-icon>Upload video files or provide URL</feature-item>
<feature-item><ui-icon name="music"></ui-icon>Audio extraction</feature-item>
<feature-item><ui-icon name="globe"></ui-icon>Language detection</feature-item>
<feature-item><ui-icon name="speak"></ui-icon>English accent classification</feature-item>
<feature-item><ui-icon name="chart" style="--w:18px;--h:20px;margin:0 1px"></ui-icon>Confidence scoring and analysis</feature-item>
</div>
<div class="cols"><video-input></video-input><analysis-results></analysis-results></div>
<hr class="low">
<footer><span>Built with</span><ui-icon name="heart"></ui-icon><span>from Nairobi, Kenya - using Streamlit, OpenAI Whisper, Ollama, and Langchain</span></footer>
</main>`);

define('browser-window',`<style>
:host{display:flex;flex-direction:column;box-sizing:border-box;border:1px solid #55565b;border-radius:10px;overflow:hidden;box-shadow:0 0 0 1px #000;color:#fafafa;font-family:"Noto Sans CJK SC",sans-serif;font-weight:500}
.load{height:2px;flex:none;border-top:1px solid #23222b;background:linear-gradient(90deg,#ff4b4b,#fe9c5c 55%,#ffd978 80%,#fffd80)}
.body{flex:1;display:flex}
</style><tab-strip></tab-strip><nav-bar></nav-bar><div class="load"></div><div class="body"><side-bar></side-bar><main-view></main-view></div>`);

define('dock-item',`<style>:host{display:flex;flex-direction:column;align-items:center;width:18px;--w:18px}i{width:3px;height:3px;border-radius:50%;margin-top:4px}:host([open]) i{background:#d9a5b0}</style><slot></slot><i></i>`);
define('mac-dock',`<style>
:host{display:flex;gap:6px;box-sizing:border-box;height:32px;padding:4px 4px 0;border:1px solid #74505d;border-radius:9px;background:#431525}
hr{width:1px;height:24px;border:0;margin:-1px 2px 0;background:#80586a}
.cal{width:18px;height:18px;border-radius:4px;background:#fff;overflow:hidden;text-align:center;font:11px/12px Inter,sans-serif;color:#333}
.cal b{display:block;background:#f5473f;color:#fff;font-size:5px;line-height:6px}
</style>
<dock-item open><ui-icon name="finder"></ui-icon></dock-item><dock-item open><ui-icon name="terminal"></ui-icon></dock-item><dock-item><ui-icon name="figma"></ui-icon></dock-item><dock-item open><ui-icon name="firefoxdock"></ui-icon></dock-item><dock-item><div class="cal"><b>MAY</b>31</div></dock-item><dock-item><ui-icon name="calc"></ui-icon></dock-item><dock-item><ui-icon name="notes"></ui-icon></dock-item><dock-item><ui-icon name="clock"></ui-icon></dock-item><dock-item open><ui-icon name="vscode"></ui-icon></dock-item><dock-item><ui-icon name="docker"></ui-icon></dock-item><dock-item><ui-icon name="slack"></ui-icon></dock-item><hr><dock-item><ui-icon name="libre"></ui-icon></dock-item><dock-item><ui-icon name="quicktime"></ui-icon></dock-item><dock-item><ui-icon name="ollama"></ui-icon></dock-item><hr><dock-item><ui-icon name="trash" style="--h:20px"></ui-icon></dock-item>`);

define('desk-top',`<style>
:host{display:grid;min-height:100vh}
wall-paper,.stack{grid-area:1/1}
wall-paper{min-height:0;height:100vh}
.stack{display:flex;flex-direction:column;align-items:center;padding:5px 5px 5px 11px;gap:4px}
browser-window{flex:1;align-self:stretch}
</style><wall-paper></wall-paper><div class="stack"><browser-window></browser-window><mac-dock></mac-dock></div>`);
</script>
</body>
</html>
